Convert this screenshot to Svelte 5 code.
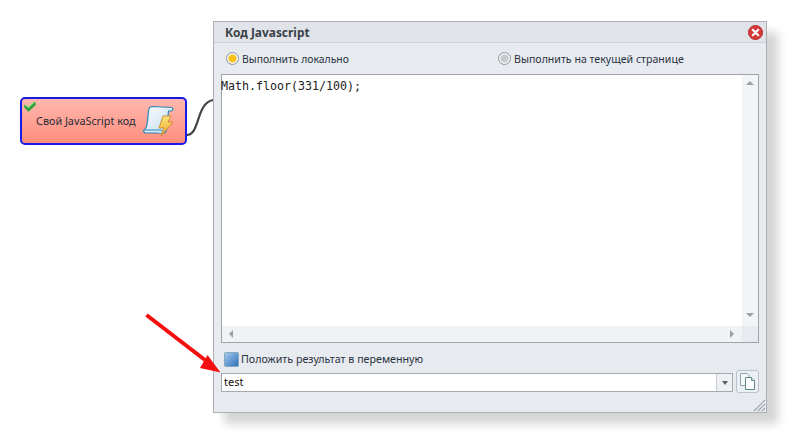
<script>
  let code = 'Math.floor(331/100);';
</script>

<div class="canvas">
  <svg class="wire" width="40" height="50" viewBox="0 0 40 50">
    <path d="M1 39 C 14 39 10 7 27 4" fill="none" stroke="#444" stroke-width="2.200" />
  </svg>

  <div class="node">
    <svg class="check" width="12" height="11" viewBox="0 0 12 11">
      <path d="M.5 4 L4.500 7.500 L11 1 L11.500 4 L4.500 10.500 L.5 6.500Z" fill="#2f9e3a" stroke="#3fae46" stroke-width=".8"/>
      <path d="M2 4 L4.500 6 L9.500 1.500" fill="none" stroke="#8bdc7c" stroke-width="1.400"/>
    </svg>
    <span class="node-text">Свой JavaScript код</span>
    <svg class="scroll" width="31" height="31" viewBox="0 0 31 31">
      <defs>
        <linearGradient id="paper" x1="0" y1="0" x2="1" y2="1">
          <stop offset="0" stop-color="#ffffff"/><stop offset="1" stop-color="#bcd9ec"/>
        </linearGradient>
        <linearGradient id="bolt" x1="0" y1="0" x2="0" y2="1">
          <stop offset="0" stop-color="#fbe27a"/><stop offset="1" stop-color="#eda92b"/>
        </linearGradient>
      </defs>
      <path d="M1 25 C3 24 4 22 4.500 16 L5.500 6 C6 3 7 1.500 9 1.500 L28.500 2.500 C30.500 3 30 6 28 6 L25.500 6 L23.500 25 C23 27 22 28 20 28 L3 28 C1 28 0 26 1 25Z" fill="url(#paper)" stroke="#2c86b8" stroke-width="1.200"/>
      <path d="M1 25 L18 25 C19.500 25 20 26.500 19 28" fill="#d8ebf6" stroke="#2c86b8" stroke-width="1"/>
      <path d="M20 11 L28 11 L25 17 L30 17 L18 31 L21 23 L16 23Z" fill="url(#bolt)" stroke="#c98a2a" stroke-width=".9"/>
    </svg>
  </div>

  <section class="window">
    <header class="title">
      <span>Код Javascript</span>
      <svg class="close" width="15" height="15" viewBox="0 0 15 15">
        <circle cx="7.500" cy="7.500" r="7" fill="#d8393a" stroke="#b52a2c"/>
        <path d="M4.800 4.800 L10.200 10.200 M10.200 4.800 L4.800 10.200" stroke="#fff" stroke-width="2.200" stroke-linecap="round"/>
      </svg>
    </header>

    <div class="body">
      <div class="radios">
        <label class="radio first"><i class="dot on"></i>Выполнить локально</label>
        <label class="radio"><i class="dot"></i>Выполнить на текущей странице</label>
      </div>

      <div class="editor">
        <div class="code-row">
          <pre class="code">{code}</pre>
          <div class="vbar"><i class="up"></i><i class="down"></i></div>
        </div>
        <div class="hbar"><i class="left"></i><i class="right"></i><b class="corner"></b></div>
      </div>

      <div class="check-row">
        <svg width="15" height="15" viewBox="0 0 15 15">
          <defs>
            <linearGradient id="cb" x1="0" y1="0" x2="1" y2="1">
              <stop offset="0" stop-color="#a6cdef"/><stop offset="1" stop-color="#2a6db4"/>
            </linearGradient>
          </defs>
          <rect x=".5" y=".5" width="14" height="14" rx="1" fill="url(#cb)" stroke="#8aa7c0"/>
        </svg>
        <span class="check-text">Положить результат в переменную</span>
      </div>

      <div class="input-row">
        <div class="combo">
          <span class="value">test</span>
          <span class="drop"><i></i></span>
        </div>
        <button class="copy" aria-label="copy">
          <svg width="17" height="19" viewBox="0 0 17 19">
            <path d="M1.500 1.500 H8 L10 3.500 V13.500 H1.500Z" fill="#f6f9fa" stroke="#8fa3a8"/>
            <path d="M6.500 5.500 H12.500 L15.500 8.500 V17.500 H6.500Z" fill="#fff" stroke="#5f8a86"/>
            <path d="M12.500 5.500 V8.500 H15.500" fill="#d5e6e6" stroke="#5f8a86"/>
          </svg>
        </button>
      </div>
    </div>

    <svg class="grip" width="14" height="14" viewBox="0 0 14 14">
      <path d="M13 2 L2 13 M13 6 L6 13 M13 10 L10 13" stroke="#a0a6ad" stroke-width="1.200"/>
    </svg>
  </section>

  <svg class="arrow" width="84" height="66" viewBox="0 0 84 66">
    <path d="M1.500 2 L60 47" stroke="#f40e0e" stroke-width="4" fill="none"/>
    <path d="M75.500 59.500 L55 55 L62.500 42Z" fill="#f40e0e"/>
  </svg>
</div>

<style>
  :global(body) { margin: 0; background: #fff; }
  .canvas {
    position: relative;
    width: 792px;
    height: 434px;
    overflow: hidden;
    background: #fff;
    font-family: "Noto Sans", "Open Sans", sans-serif;
    font-size: 10.600px;
    color: #2a3240;
  }
  .wire { position: absolute; left: 186px; top: 96px; }
  .node {
    position: absolute;
    left: 20px;
    top: 97px;
    width: 167px;
    height: 48px;
    box-sizing: border-box;
    border: 2px solid #1a1ae6;
    border-radius: 5px;
    background: linear-gradient(#ffb8b0, #ff8d7b);
    display: flex;
    align-items: center;
    padding: 0 0 2px 14px;
  }
  .check { position: absolute; left: 2px; top: 2px; }
  .node-text { font-size: 10.800px; color: #252a35; }
  .scroll { position: absolute; left: 121px; top: 6px; }

  .window {
    position: absolute;
    left: 213px;
    top: 21px;
    width: 554px;
    height: 392px;
    box-sizing: border-box;
    border: 1px solid #aab0b6;
    background: #e7ebf0;
    box-shadow: 11px 11px 9px rgba(0, 0, 0, 0.17);
    display: flex;
    flex-direction: column;
  }
  .title {
    height: 20px;
    background: #e0e4e9;
    border-bottom: 1px solid #cdd2d8;
    display: flex;
    align-items: center;
    justify-content: space-between;
    padding: 0 3px 0 11px;
    font-weight: 700;
    font-size: 11.900px;
    color: #3b4048;
  }
  .body {
    flex: 1;
    padding: 0 7px;
    display: flex;
    flex-direction: column;
    min-height: 0;
  }
  .radios {
    height: 31px;
    display: flex;
    align-items: center;
    padding-left: 5px;
  }
  .radio { display: flex; align-items: center; gap: 3px; }
  .first { width: 272px; font-size: 10.400px; }
  .dot {
    width: 13px;
    height: 13px;
    box-sizing: border-box;
    border-radius: 50%;
    border: 1px solid #8f959b;
    background: radial-gradient(circle, #c6c9cd 0 3.500px, #f1f2f4 4.500px);
  }
  .dot.on { background: radial-gradient(circle, #f8c21a 0 3.500px, #f4f5f6 4.500px); }

  .editor {
    height: 269px;
    border: 1px solid #a0a4a9;
    background: #fff;
    display: flex;
    flex-direction: column;
    box-sizing: border-box;
  }
  .code-row { flex: 1; display: flex; min-height: 0; }
  .code {
    flex: 1;
    margin: 0 0 0 -1px;
    padding: 4px 0 0 0;
    font-family: "DejaVu Sans Mono", monospace;
    font-size: 11.630px;
    line-height: 15px;
    color: #222;
  }
  .vbar {
    width: 16px;
    background: #f3f4f5;
    display: flex;
    flex-direction: column;
    justify-content: space-between;
    align-items: center;
    padding: 6px 0 9px;
  }
  .hbar {
    height: 16px;
    background: #f1f2f3;
    display: flex;
    align-items: center;
    justify-content: space-between;
    padding-left: 7px;
  }
  .corner { width: 16px; height: 16px; background: #e7ebf0; margin-left: 8px; }
  .up, .down, .drop i {
    width: 0;
    height: 0;
    border-left: 4px solid transparent;
    border-right: 4px solid transparent;
  }
  .up { border-bottom: 4px solid #9a9fa6; }
  .down { border-top: 4px solid #9a9fa6; }
  .left, .right {
    width: 0;
    height: 0;
    border-top: 4px solid transparent;
    border-bottom: 4px solid transparent;
  }
  .left { border-right: 4px solid #9a9fa6; }
  .right { border-left: 4px solid #9a9fa6; margin-left: auto; }

  .check-row {
    height: 15px;
    margin-top: 9px;
    padding-left: 3px;
    display: flex;
    align-items: center;
    gap: 2px;
  }
  .check-text { font-size: 10.700px; padding-bottom: 2px; }
  .input-row {
    margin-top: 3px;
    display: flex;
    align-items: flex-end;
    justify-content: space-between;
  }
  .combo {
    width: 512px;
    height: 19px;
    margin-bottom: 1px;
    box-sizing: border-box;
    border: 1px solid #a4aab0;
    background: #fff;
    display: flex;
    align-items: center;
    justify-content: space-between;
  }
  .value { padding: 0 0 2px 2px; color: #111; font-size: 11px; }
  .drop {
    width: 16px;
    height: 17px;
    box-sizing: border-box;
    border-left: 1px solid #c6ccd2;
    background: #eef0f3;
    display: flex;
    align-items: center;
    justify-content: center;
  }
  .drop i {
    border-left-width: 3.500px;
    border-right-width: 3.500px;
    border-top: 4px solid #5a6068;
  }
  .copy {
    width: 23px;
    height: 23px;
    padding: 0;
    box-sizing: border-box;
    border: 1px solid #bcc2c9;
    border-radius: 3px;
    background: #eceff3;
    display: flex;
    align-items: center;
    justify-content: center;
  }
  .grip { position: absolute; right: 0; bottom: 0; }
  .arrow { position: absolute; left: 145px; top: 313px; }
</style>
